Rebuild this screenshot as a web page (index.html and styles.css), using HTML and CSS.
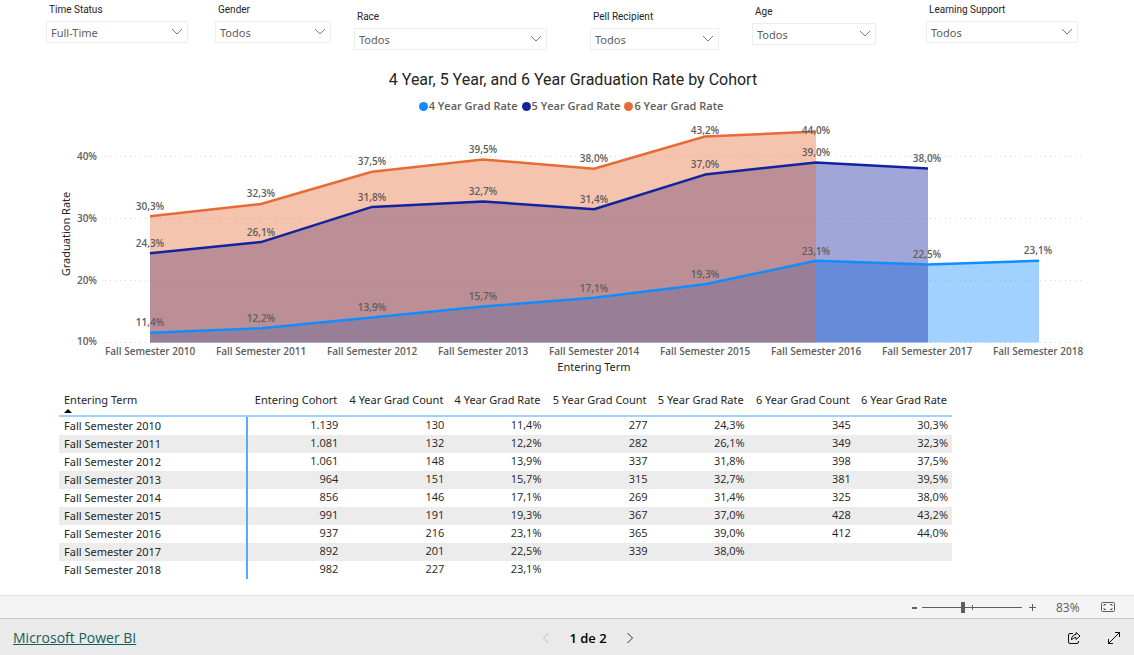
FILE: index.html
```html
<!DOCTYPE html>
<html lang="en">
<head>
<meta charset="utf-8">
<title>Graduation Rate by Cohort</title>
<link rel="stylesheet" href="styles.css">
</head>
<body>
<main class="report">
  <form class="slicers">
    <div class="slicer slicer-time">
      <label for="time">Time Status</label>
      <div class="picker"><select id="time"><option>Full-Time</option></select><svg class="chevron" viewBox="0 0 12 8"><path d="M1 1l5 5 5-5"/></svg></div>
    </div>
    <div class="slicer slicer-gender">
      <label for="gender">Gender</label>
      <div class="picker"><select id="gender"><option>Todos</option></select><svg class="chevron" viewBox="0 0 12 8"><path d="M1 1l5 5 5-5"/></svg></div>
    </div>
    <div class="slicer slicer-race">
      <label for="race">Race</label>
      <div class="picker"><select id="race"><option>Todos</option></select><svg class="chevron" viewBox="0 0 12 8"><path d="M1 1l5 5 5-5"/></svg></div>
    </div>
    <div class="slicer slicer-pell">
      <label for="pell">Pell Recipient</label>
      <div class="picker"><select id="pell"><option>Todos</option></select><svg class="chevron" viewBox="0 0 12 8"><path d="M1 1l5 5 5-5"/></svg></div>
    </div>
    <div class="slicer slicer-age">
      <label for="age">Age</label>
      <div class="picker"><select id="age"><option>Todos</option></select><svg class="chevron" viewBox="0 0 12 8"><path d="M1 1l5 5 5-5"/></svg></div>
    </div>
    <div class="slicer slicer-support">
      <label for="support">Learning Support</label>
      <div class="picker"><select id="support"><option>Todos</option></select><svg class="chevron" viewBox="0 0 12 8"><path d="M1 1l5 5 5-5"/></svg></div>
    </div>
  </form>

  <section class="chart">
    <h1 class="chart-title">4 Year, 5 Year, and 6 Year Graduation Rate by Cohort</h1>
    <ul class="legend">
      <li><span class="dot dot-four"></span>4 Year Grad Rate</li>
      <li><span class="dot dot-five"></span>5 Year Grad Rate</li>
      <li><span class="dot dot-six"></span>6 Year Grad Rate</li>
    </ul>
    <svg class="plot" viewBox="0 118 1134 260" role="img" aria-label="Graduation rate by entering term">
      <g class="grid">
        <path d="M105 156.5H1084M105 218.5H1084M105 280.5H1084M105 342.5H1084"/>
      </g>
      <path class="area-four" d="M150 332.8L261 328.2 372 317.6 483 306.5 594 297.8 705 284.2 816 260.8 928 264.4 1039 260.8V342.5H150z"/>
      <path class="area-five" d="M150 253.2L261 242.1 372 206.9 483 201.4 594 209.3 705 174.6 816 162.4 928 168.6V342.5H150z"/>
      <path class="area-six" d="M150 216.3L261 204 372 171.8 483 159.4 594 168.7 705 136.5 816 131.6V342.5H150z"/>
      <path class="line-six" d="M150 216.3L261 204 372 171.8 483 159.4 594 168.7 705 136.5 816 131.6"/>
      <path class="line-five" d="M150 253.2L261 242.1 372 206.9 483 201.4 594 209.3 705 174.6 816 162.4 928 168.6"/>
      <path class="line-four" d="M150 332.8L261 328.2 372 317.6 483 306.5 594 297.8 705 284.2 816 260.8 928 264.4 1039 260.8"/>
      <g class="data-labels">
        <text x="150" y="210">30,3%</text><text x="261" y="197">32,3%</text><text x="372" y="165">37,5%</text><text x="483" y="153">39,5%</text><text x="594" y="162">38,0%</text><text x="705" y="134">43,2%</text><text x="816" y="134">44,0%</text>
        <text x="150" y="247">24,3%</text><text x="261" y="236">26,1%</text><text x="372" y="201">31,8%</text><text x="483" y="195">32,7%</text><text x="594" y="203">31,4%</text><text x="705" y="168">37,0%</text><text x="816" y="156">39,0%</text><text x="927" y="162">38,0%</text>
        <text x="150" y="326">11,4%</text><text x="261" y="322">12,2%</text><text x="372" y="311">13,9%</text><text x="483" y="300">15,7%</text><text x="594" y="292">17,1%</text><text x="705" y="278">19,3%</text><text x="816" y="255">23,1%</text><text x="927" y="258">22,5%</text><text x="1038" y="254">23,1%</text>
      </g>
      <g class="y-labels">
        <text x="97" y="160">40%</text><text x="97" y="222">30%</text><text x="97" y="284">20%</text><text x="97" y="345">10%</text>
      </g>
      <g class="x-labels">
        <text x="150" y="355">Fall Semester 2010</text><text x="261" y="355">Fall Semester 2011</text><text x="372" y="355">Fall Semester 2012</text><text x="483" y="355">Fall Semester 2013</text><text x="594" y="355">Fall Semester 2014</text><text x="705" y="355">Fall Semester 2015</text><text x="816" y="355">Fall Semester 2016</text><text x="927" y="355">Fall Semester 2017</text><text x="1038" y="355">Fall Semester 2018</text>
      </g>
      <text class="axis-title" x="594" y="371">Entering Term</text>
      <text class="axis-title" transform="translate(70 234) rotate(-90)">Graduation Rate</text>
    </svg>
  </section>

  <section class="matrix">
    <table>
      <colgroup><col class="col-term"><col class="col-cohort"><col class="col-count"><col class="col-rate"><col class="col-count"><col class="col-rate"><col class="col-count"><col class="col-rate"></colgroup>
      <thead>
        <tr><th scope="col" aria-sort="ascending">Entering Term<svg class="sort" viewBox="0 0 8 4"><path d="M0 4L4 0l4 4z"/></svg></th><th scope="col">Entering Cohort</th><th scope="col">4 Year Grad Count</th><th scope="col">4 Year Grad Rate</th><th scope="col">5 Year Grad Count</th><th scope="col">5 Year Grad Rate</th><th scope="col">6 Year Grad Count</th><th scope="col">6 Year Grad Rate</th></tr>
      </thead>
      <tbody>
        <tr><th scope="row">Fall Semester 2010</th><td>1.139</td><td>130</td><td>11,4%</td><td>277</td><td>24,3%</td><td>345</td><td>30,3%</td></tr>
        <tr><th scope="row">Fall Semester 2011</th><td>1.081</td><td>132</td><td>12,2%</td><td>282</td><td>26,1%</td><td>349</td><td>32,3%</td></tr>
        <tr><th scope="row">Fall Semester 2012</th><td>1.061</td><td>148</td><td>13,9%</td><td>337</td><td>31,8%</td><td>398</td><td>37,5%</td></tr>
        <tr><th scope="row">Fall Semester 2013</th><td>964</td><td>151</td><td>15,7%</td><td>315</td><td>32,7%</td><td>381</td><td>39,5%</td></tr>
        <tr><th scope="row">Fall Semester 2014</th><td>856</td><td>146</td><td>17,1%</td><td>269</td><td>31,4%</td><td>325</td><td>38,0%</td></tr>
        <tr><th scope="row">Fall Semester 2015</th><td>991</td><td>191</td><td>19,3%</td><td>367</td><td>37,0%</td><td>428</td><td>43,2%</td></tr>
        <tr><th scope="row">Fall Semester 2016</th><td>937</td><td>216</td><td>23,1%</td><td>365</td><td>39,0%</td><td>412</td><td>44,0%</td></tr>
        <tr><th scope="row">Fall Semester 2017</th><td>892</td><td>201</td><td>22,5%</td><td>339</td><td>38,0%</td><td></td><td></td></tr>
        <tr><th scope="row">Fall Semester 2018</th><td>982</td><td>227</td><td>23,1%</td><td></td><td></td><td></td><td></td></tr>
      </tbody>
    </table>
  </section>
</main>

<div class="zoom-bar">
  <button class="zoom-step" type="button" aria-label="Zoom out"><svg class="step-icon" viewBox="0 0 9 9"><path d="M2 4h5v2H2z"/></svg></button>
  <input class="zoom-slider" type="range" min="10" max="190" value="83" aria-label="Zoom">
  <button class="zoom-step" type="button" aria-label="Zoom in"><svg class="step-icon" viewBox="0 0 9 9"><path d="M1 4h3V1h1v3h3v1H5v3H4V5H1z"/></svg></button>
  <span class="zoom-value">83%</span>
  <button class="fit" type="button" aria-label="Fit to page"><svg viewBox="0 0 14 10"><rect x=".5" y=".5" width="13" height="9" rx="1"/><path d="M3 4V2.500h2M9 2.500h2V4M3 6v1.500h2M9 7.500h2V6"/></svg></button>
</div>

<footer class="footer">
  <a class="brand" href="#">Microsoft Power BI</a>
  <nav class="pager">
    <button type="button" aria-label="Previous page" disabled><svg viewBox="0 0 8 12"><path d="M6.500 1L1.500 6l5 5"/></svg></button>
    <span>1 de 2</span>
    <button type="button" aria-label="Next page"><svg viewBox="0 0 8 12"><path d="M1.500 1l5 5-5 5"/></svg></button>
  </nav>
  <div class="actions">
    <button type="button" aria-label="Share"><svg viewBox="0 0 14 14"><path d="M6 2.500H3Q1.500 2.500 1.500 4v7Q1.500 12.500 3 12.500h7Q11.500 12.500 11.500 11v-1M9 1.500l4 3.500-4 3.500v-2Q6 6.500 4.500 9 4.500 4 9 3.500z"/></svg></button>
    <button type="button" aria-label="Full screen"><svg viewBox="0 0 14 14"><path d="M1.500 12.500l11-11M8 1.500h4.500V6M1.500 8v4.500H6"/></svg></button>
  </div>
</footer>
</body>
</html>
```
FILE: styles.css
```css
* { box-sizing: border-box; }

body {
  margin: 0;
  min-height: 100vh;
  display: flex;
  flex-direction: column;
  background: #fff;
  color: #252423;
  font-family: "Open Sans", "Noto Sans", sans-serif;
  font-size: 12px;
}

button {
  display: flex;
  align-items: center;
  justify-content: center;
  padding: 0;
  border: 0;
  background: none;
  color: inherit;
}

.report { flex: 1; }

/* Slicers */
.slicers {
  display: grid;
  grid-template-columns: 142fr 27fr 116fr 23fr 193fr 43fr 129fr 33fr 124fr 50fr 152fr;
  align-items: start;
  padding: 3px 56px 0 46px;
}
.slicer label {
  display: block;
  height: 18px;
  padding-left: 3px;
  font-family: Roboto, sans-serif;
  font-size: 10px;
  line-height: 14px;
}
.slicer-time { grid-column: 1; }
.slicer-gender { grid-column: 3; }
.slicer-race { grid-column: 5; margin-top: 7px; }
.slicer-pell { grid-column: 7; margin-top: 7px; }
.slicer-age { grid-column: 9; margin-top: 2px; }
.slicer-support { grid-column: 11; }
.picker { display: grid; align-items: center; }
.picker select {
  grid-area: 1 / 1;
  appearance: none;
  width: 100%;
  height: 22px;
  padding: 0 20px 0 4px;
  border: 1px solid #eee;
  border-radius: 0;
  background: #fff;
  color: #605e5c;
  font-family: "Noto Sans", sans-serif;
  font-size: 11px;
}
.chevron {
  grid-area: 1 / 1;
  justify-self: end;
  width: 12px;
  height: 8px;
  margin-right: 5px;
  pointer-events: none;
  fill: none;
  stroke: #7a7876;
}

/* Chart */
.chart-title {
  margin: 20px 0 0;
  padding-left: 12px;
  text-align: center;
  font-family: Roboto, sans-serif;
  font-size: 16px;
  font-weight: 400;
  line-height: 20px;
}
.legend {
  display: flex;
  justify-content: center;
  gap: 4px;
  margin: 8px 0 0;
  padding: 0 0 0 8px;
  list-style: none;
  color: #605e5c;
  font-size: 11px;
  font-weight: 600;
  line-height: 16px;
}
.legend li { display: flex; align-items: center; gap: 1px; }
.dot { width: 9px; height: 9px; border-radius: 50%; }
.dot-four { background: #118dff; }
.dot-five { background: #12239e; }
.dot-six { background: #e66c37; }
.plot { display: block; width: 100%; margin-top: 4px; }
.grid { fill: none; stroke: #d8d8d8; stroke-width: 1; stroke-dasharray: 1 4; }
.area-four { fill: #118dff; fill-opacity: 0.4; }
.area-five { fill: #12239e; fill-opacity: 0.4; }
.area-six { fill: #e66c37; fill-opacity: 0.4; }
.line-four, .line-five, .line-six { fill: none; stroke-width: 2.500; stroke-linejoin: round; }
.line-four { stroke: #118dff; }
.line-five { stroke: #12239e; }
.line-six { stroke: #e66c37; }
.data-labels, .x-labels, .y-labels { fill: #605e5c; font-size: 10px; font-weight: 600; text-anchor: middle; }
.y-labels { text-anchor: end; }
.axis-title { fill: #252423; font-family: "Noto Sans", sans-serif; font-size: 11px; text-anchor: middle; }

/* Matrix */
.matrix { padding: 12px 182px 0 59px; }
.matrix table { width: 100%; border-collapse: separate; border-spacing: 0; table-layout: fixed; }
.col-term { width: 189px; }
.col-cohort { width: 94px; }
.col-count { width: 106px; }
.col-rate { width: 97px; }
.matrix th { font-family: "Noto Sans", sans-serif; font-weight: 400; }
.matrix th, .matrix td { padding: 0 4px; text-align: right; white-space: nowrap; font-size: 11px; }
.matrix thead th {
  height: 27px;
  padding-right: 5px;
  vertical-align: top;
  border-bottom: 2px solid #a0d1ff;
  line-height: 20px;
}
.matrix thead th, .matrix tbody td { color: #252423; }
.matrix tr th:first-child { padding-left: 5px; text-align: left; }
.matrix tbody th { height: 18px; border-right: 2px solid #5aaafa; line-height: 18px; }
.matrix tbody td { height: 18px; padding-bottom: 2px; line-height: 16px; }
.matrix tbody tr:nth-child(even) { background: #ececec; }
.sort { display: block; width: 8px; height: 4px; margin-top: -1px; }

/* Zoom bar */
.zoom-bar {
  display: flex;
  align-items: center;
  justify-content: flex-end;
  height: 23px;
  padding-right: 19px;
  border-top: 1px solid #e0e0e0;
  background: #f4f4f4;
  color: #605e5c;
}
.step-icon { display: block; width: 9px; height: 9px; fill: #605e5c; }
.zoom-slider {
  appearance: none;
  width: 100px;
  height: 12px;
  margin: 0 6px 0 3px;
  background:
    linear-gradient(#605e5c, #605e5c) 50px 50% / 1px 5px no-repeat,
    linear-gradient(#605e5c, #605e5c) 0 50% / 100% 1px no-repeat;
}
.zoom-slider::-webkit-slider-thumb { appearance: none; width: 4px; height: 11px; background: #605e5c; }
.zoom-value { width: 42px; margin-left: 19px; font-size: 12px; }
.fit { margin-left: 3px; }
.fit svg { width: 14px; height: 10px; fill: none; stroke: #605e5c; }

/* Footer */
.footer {
  display: grid;
  grid-template-columns: 1fr auto 1fr;
  align-items: center;
  height: 37px;
  padding: 1px 13px 0;
  border-top: 1px solid #c8c8c8;
  background: #eaeaea;
}
.brand { color: #14605a; font-size: 14px; }
.pager { display: flex; align-items: center; gap: 19px; margin-left: 42px; color: #000; font-size: 13px; font-weight: 600; }
.pager svg { width: 8px; height: 12px; fill: none; stroke: #333; }
.pager button:disabled svg { stroke: #bbb; }
.actions { display: flex; justify-content: flex-end; gap: 26px; }
.actions svg { width: 14px; height: 14px; fill: none; stroke: #111; }
```
